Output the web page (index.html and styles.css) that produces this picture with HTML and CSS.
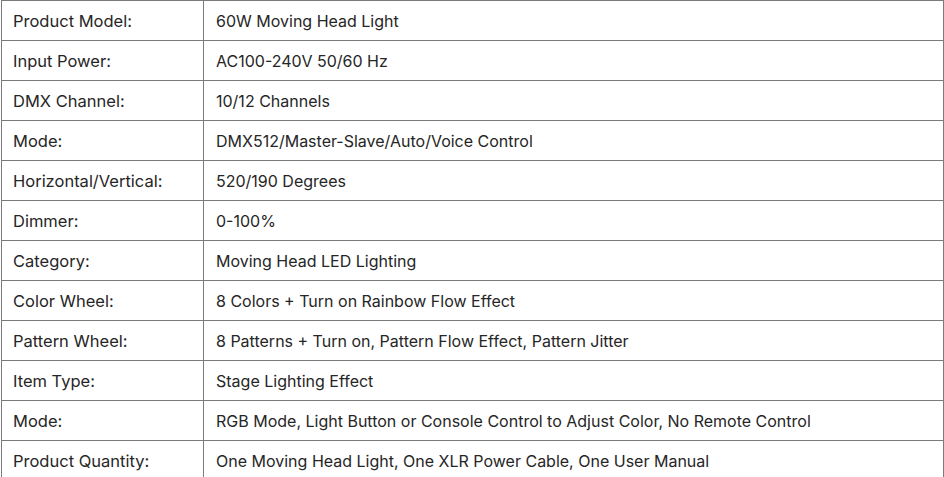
FILE: index.html
```html
<!DOCTYPE html>
<html>
<head>
<meta charset="utf-8">
<link rel="stylesheet" href="styles.css">
</head>
<body>
<div class="spec">
  <div class="row"><div class="key">Product Model:</div><div class="val">60W Moving Head Light</div></div>
  <div class="row"><div class="key">Input Power:</div><div class="val">AC100-240V 50/60 Hz</div></div>
  <div class="row"><div class="key">DMX Channel:</div><div class="val">10/12 Channels</div></div>
  <div class="row"><div class="key">Mode:</div><div class="val">DMX512/Master-Slave/Auto/Voice Control</div></div>
  <div class="row"><div class="key">Horizontal/Vertical:</div><div class="val">520/190 Degrees</div></div>
  <div class="row"><div class="key">Dimmer:</div><div class="val">0-100%</div></div>
  <div class="row"><div class="key">Category:</div><div class="val">Moving Head LED Lighting</div></div>
  <div class="row"><div class="key">Color Wheel:</div><div class="val">8 Colors + Turn on Rainbow Flow Effect</div></div>
  <div class="row"><div class="key">Pattern Wheel:</div><div class="val">8 Patterns + Turn on, Pattern Flow Effect, Pattern Jitter</div></div>
  <div class="row"><div class="key">Item Type:</div><div class="val">Stage Lighting Effect</div></div>
  <div class="row"><div class="key">Mode:</div><div class="val">RGB Mode, Light Button or Console Control to Adjust Color, No Remote Control</div></div>
  <div class="row"><div class="key">Product Quantity:</div><div class="val">One Moving Head Light, One XLR Power Cable, One User Manual</div></div>
</div>
</body>
</html>
```
FILE: styles.css
```css
html, body {
  margin: 0;
  padding: 0;
  background: #fff;
}
body {
  font-family: "Inter", "Noto Sans", sans-serif;
  font-size: 16px;
  color: #262626;
}
.spec {
  margin-left: 1px;
  width: 943px;
  box-sizing: border-box;
  border-top: 1px solid #7a7a7a;
  border-left: 1px solid #7a7a7a;
  border-right: 1px solid #7a7a7a;
}
.row {
  display: grid;
  grid-template-columns: 202px 1fr;
  height: 40px;
  box-sizing: border-box;
  border-bottom: 1px solid #7a7a7a;
}
.key, .val {
  display: flex;
  align-items: center;
  white-space: nowrap;
}
.key {
  padding-left: 11px;
  font-size: 16.5px;
  border-right: 1px solid #7a7a7a;
}
.val {
  padding-left: 12px;
}
```
